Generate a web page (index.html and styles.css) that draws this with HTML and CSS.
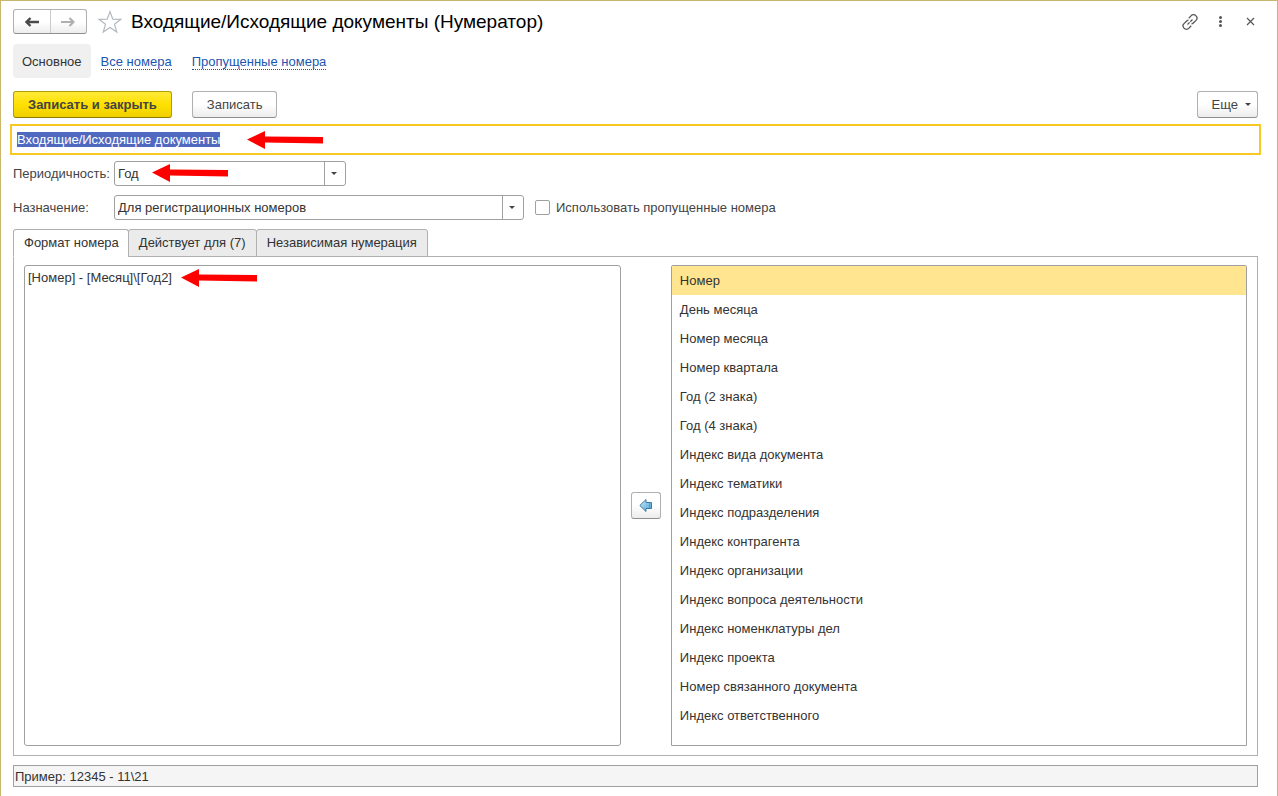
FILE: index.html
```html
<!DOCTYPE html>
<html lang="ru">
<head>
<meta charset="utf-8">
<title>Входящие/Исходящие документы (Нумератор)</title>
<link rel="stylesheet" href="styles.css">
</head>
<body>
<svg class="defs" aria-hidden="true">
  <symbol id="pointer" viewBox="0 0 76 18"><path d="M0 8.500 18 0v5.500L76 6v6.500L18 11.500V18z" fill="#fe0000"/></symbol>
</svg>
<main class="window">
  <header class="titlebar">
    <div class="history">
      <button type="button" aria-label="Назад"><svg width="14" height="10" viewBox="0 0 14 10"><path d="M5.500 1 1.500 5l4 4M2 5h12" fill="none" stroke="#4a4a4a" stroke-width="2.400"/></svg></button>
      <button type="button" aria-label="Вперед"><svg width="14" height="10" viewBox="0 0 14 10"><path d="m8.500 1 4 4-4 4M12 5H0" fill="none" stroke="#b0b0b0" stroke-width="2.200"/></svg></button>
    </div>
    <button type="button" class="icon star" aria-label="В избранное"><svg width="24" height="24" viewBox="0 0 24 24"><path d="M12 1.500l2.800 7.600 8.200.2-6.500 5 2.300 7.700L12 17.400 5.200 22l2.300-7.700L1 9.300l8.200-.2z" fill="#fff" stroke="#b4b9bf" stroke-width="1.200"/></svg></button>
    <h1>Входящие/Исходящие документы (Нумератор)</h1>
    <div class="tools">
      <button type="button" class="icon" aria-label="Ссылка"><svg width="16" height="16" viewBox="0 0 16 16" fill="none" stroke="#555" stroke-width="1.300"><path d="M6.800 4.200 9 1.900a3.200 3.200 0 0 1 5 0 3.200 3.200 0 0 1 0 4.500L11.300 9a2.600 2.600 0 0 1-1.800.8"/><path d="M9.200 11.800 7 14.100a3.200 3.200 0 0 1-5 0 3.200 3.200 0 0 1 0-4.500L4.700 7a2.600 2.600 0 0 1 1.800-.8"/><path d="m5.500 10.500 5-5" stroke-dasharray="3 1"/></svg></button>
      <button type="button" class="icon" aria-label="Меню"><svg width="16" height="16" viewBox="0 0 16 16" fill="#555"><circle cx="8.500" cy="3.500" r="1.500"/><circle cx="8.500" cy="7.500" r="1.500"/><circle cx="8.500" cy="11.500" r="1.500"/></svg></button>
      <button type="button" class="icon" aria-label="Закрыть"><svg width="16" height="16" viewBox="0 0 16 16"><path d="m5 4 7 7m0-7-7 7" stroke="#555" stroke-width="1.200"/></svg></button>
    </div>
  </header>

  <nav class="sections">
    <a class="section current" href="#main" aria-current="page">Основное</a>
    <a class="section" href="#all"><span>Все номера</span></a>
    <a class="section" href="#skipped"><span>Пропущенные номера</span></a>
  </nav>

  <div class="commands">
    <button type="button" class="btn primary">Записать и закрыть</button>
    <button type="button" class="btn">Записать</button>
    <button type="button" class="btn more">Еще <i class="caret"></i></button>
  </div>

  <div class="name-field">
    <input id="name" type="text" aria-label="Наименование" value="Входящие/Исходящие документы" autofocus>
    <svg class="pointer at-name" aria-hidden="true"><use href="#pointer"/></svg>
  </div>

  <div class="row">
    <label for="period">Периодичность:</label>
    <div class="combo short">
      <select id="period"><option>Год</option></select><i class="caret"></i>
      <svg class="pointer at-period" aria-hidden="true"><use href="#pointer"/></svg>
    </div>
  </div>
  <div class="row">
    <label for="purpose">Назначение:</label>
    <div class="combo"><select id="purpose"><option>Для регистрационных номеров</option></select><i class="caret"></i></div>
    <label class="check"><input type="checkbox">Использовать пропущенные номера</label>
  </div>

  <div class="tabs" role="tablist">
    <button type="button" role="tab" aria-selected="true">Формат номера</button>
    <button type="button" role="tab" aria-selected="false">Действует для (7)</button>
    <button type="button" role="tab" aria-selected="false">Независимая нумерация</button>
  </div>
  <section class="panel" role="tabpanel">
    <div class="format">
      <textarea aria-label="Формат номера" spellcheck="false">[Номер] - [Месяц]\[Год2]</textarea>
      <svg class="pointer at-format" aria-hidden="true"><use href="#pointer"/></svg>
    </div>
    <button type="button" class="btn insert" aria-label="Вставить"><svg width="14" height="14" viewBox="0 0 14 14"><defs><linearGradient id="blue" x2="1" y2="1"><stop stop-color="#d5eefa"/><stop offset="1" stop-color="#3d9bd0"/></linearGradient></defs><path d="M.8 6.500 7 .5v3h5.500v6H7v3z" fill="url(#blue)" stroke="#3b7ba8"/><path d="M10.500 4v5" stroke="#5b9cc6"/></svg></button>
    <ul class="fields" role="listbox" aria-label="Поля">
      <li role="option" aria-selected="true">Номер</li>
      <li role="option">День месяца</li>
      <li role="option">Номер месяца</li>
      <li role="option">Номер квартала</li>
      <li role="option">Год (2 знака)</li>
      <li role="option">Год (4 знака)</li>
      <li role="option">Индекс вида документа</li>
      <li role="option">Индекс тематики</li>
      <li role="option">Индекс подразделения</li>
      <li role="option">Индекс контрагента</li>
      <li role="option">Индекс организации</li>
      <li role="option">Индекс вопроса деятельности</li>
      <li role="option">Индекс номенклатуры дел</li>
      <li role="option">Индекс проекта</li>
      <li role="option">Номер связанного документа</li>
      <li role="option">Индекс ответственного</li>
    </ul>
  </section>

  <output class="example">Пример: 12345 - 11\21</output>
</main>
<script src="main.js"></script>
</body>
</html>
```
FILE: styles.css
```css
* { box-sizing: border-box; }
body {
  margin: 0;
  background: #fff;
  color: #333;
  font: 13px/16px "Liberation Sans", Arial, sans-serif;
}
button, input, select, textarea { font: inherit; color: inherit; }
button { cursor: pointer; }
svg { display: block; flex: none; }
.defs { position: absolute; width: 0; height: 0; }

.window {
  display: flex;
  flex-direction: column;
  min-height: 100vh;
  padding: 8px 19px 9px 12px;
  border: 1px solid #c8b76a;
  border-bottom: 0;
}

.titlebar { display: flex; align-items: center; height: 25px; }
.history {
  display: flex;
  width: 74px;
  height: 25px;
  border: 1px solid #b0b0b0;
  border-bottom-color: #8f8f8f;
  border-radius: 3px;
  background: linear-gradient(#fff 50%, #ededed);
}
.history button {
  display: grid;
  place-items: center;
  flex: 1;
  padding: 0;
  border: 0;
  background: none;
}
.history button + button { border-left: 1px solid #ccc; }
.icon { padding: 0; border: 0; background: none; }
.star { margin: 0 9px 0 11px; }
h1 { margin: 0; color: #000; font-size: 19px; font-weight: 400; line-height: 24px; }
.tools { display: flex; gap: 14px; margin-left: auto; }

.sections { display: flex; margin-top: 10px; }
.section { padding: 10px 10px 8px; color: #1a56b0; text-decoration: none; }
.section span { display: block; line-height: 15px; border-bottom: 1px dotted #1a56b0; }
.section.current { padding: 10px 9px 8px; border-radius: 4px; background: #f0f0f0; color: #333; }

.commands { display: flex; gap: 20px; margin-top: 13px; }
.btn {
  height: 27px;
  padding: 0 13px;
  border: 1px solid #b0b0b0;
  border-bottom-color: #8f8f8f;
  border-radius: 3px;
  background: linear-gradient(#fff 50%, #ececec);
  color: #444;
}
.commands .btn { padding: 0 14px; }
.commands .primary {
  border-color: #b59c00;
  border-bottom-color: #8f7c00;
  background: linear-gradient(#ffea3a, #ffe000 50%, #efd000);
  font-weight: 700;
}
.commands .more { display: flex; align-items: center; gap: 7px; margin-left: auto; padding: 0 6px 0 14px; }
.caret {
  width: 6px;
  height: 3px;
  background: #444;
  clip-path: polygon(0 0, 100% 0, 50% 100%);
}

.name-field {
  position: relative;
  margin: 6px -3px 0;
  border: 2px solid #f8c922;
}
.name-field input {
  display: block;
  width: 100%;
  height: 27px;
  padding: 0 5px;
  border: 0;
  outline: 0;
  background: #fff;
}
.name-field input::selection { background: #4f69c1; color: #fff; }

.pointer { position: absolute; width: 76px; height: 18px; }
.at-name { left: 235px; top: 5px; }
.at-period { left: 37px; top: 2px; }
.at-format { left: 157px; top: 4px; }

.row { display: flex; align-items: center; margin-top: 9px; }
.name-field + .row { margin-top: 6px; }
.row > label:first-child { width: 101px; color: #444; }
.combo {
  position: relative;
  display: flex;
  align-items: center;
  width: 410px;
  height: 25px;
  border: 1px solid #a0a0a0;
  border-radius: 3px;
}
.combo.short { width: 232px; }
.combo select {
  width: 100%;
  height: 23px;
  padding: 0 24px 0 3px;
  border: 0;
  outline: 0;
  appearance: none;
  background: linear-gradient(#a0a0a0, #a0a0a0) right 20px top / 1px 100% no-repeat;
}
.combo .caret { position: absolute; right: 8px; pointer-events: none; }
.check { display: flex; align-items: center; gap: 6px; margin-left: 11px; color: #444; }
.check input {
  width: 15px;
  height: 15px;
  margin: 0;
  border: 1px solid #a0a0a0;
  border-radius: 2px;
  appearance: none;
}
.check input:checked { background: #ffe000; }

.tabs { position: relative; z-index: 1; display: flex; margin-top: 9px; }
.tabs button {
  height: 28px;
  margin: 0 0 0 -1px;
  padding: 0 10px;
  border: 1px solid #b0b0b0;
  border-radius: 3px 3px 0 0;
  background: #ebebeb;
}
.tabs button:first-child { margin-left: 0; padding-right: 9px; }
.tabs [aria-selected="true"] { border-bottom-color: #fff; background: #fff; }

.panel {
  display: grid;
  grid-template-columns: 1.036fr 30px 1fr;
  gap: 10px;
  flex: 1;
  margin-top: -1px;
  padding: 8px 10px 9px;
  border: 1px solid #b0b0b0;
}
.format { position: relative; display: flex; }
.format textarea {
  flex: 1;
  padding: 4px 3px;
  border: 1px solid #a0a0a0;
  border-radius: 3px;
  outline: 0;
  resize: none;
}
.panel .insert { display: grid; place-items: center; align-self: center; padding: 0; }
.fields { margin: 0; padding: 0; border: 1px solid #a0a0a0; border-radius: 2px 2px 0 0; list-style: none; }
.fields li { padding: 7px 8px 6px; }
.fields [aria-selected="true"] { background: #ffe58f; }

.example {
  margin-top: 9px;
  padding: 3px 1px 1px;
  border: 1px solid #a0a0a0;
  background: #f5f5f5;
}
```
FILE: main.js
```js
const nameInput = document.getElementById("name");
nameInput.focus();
nameInput.select();
```
